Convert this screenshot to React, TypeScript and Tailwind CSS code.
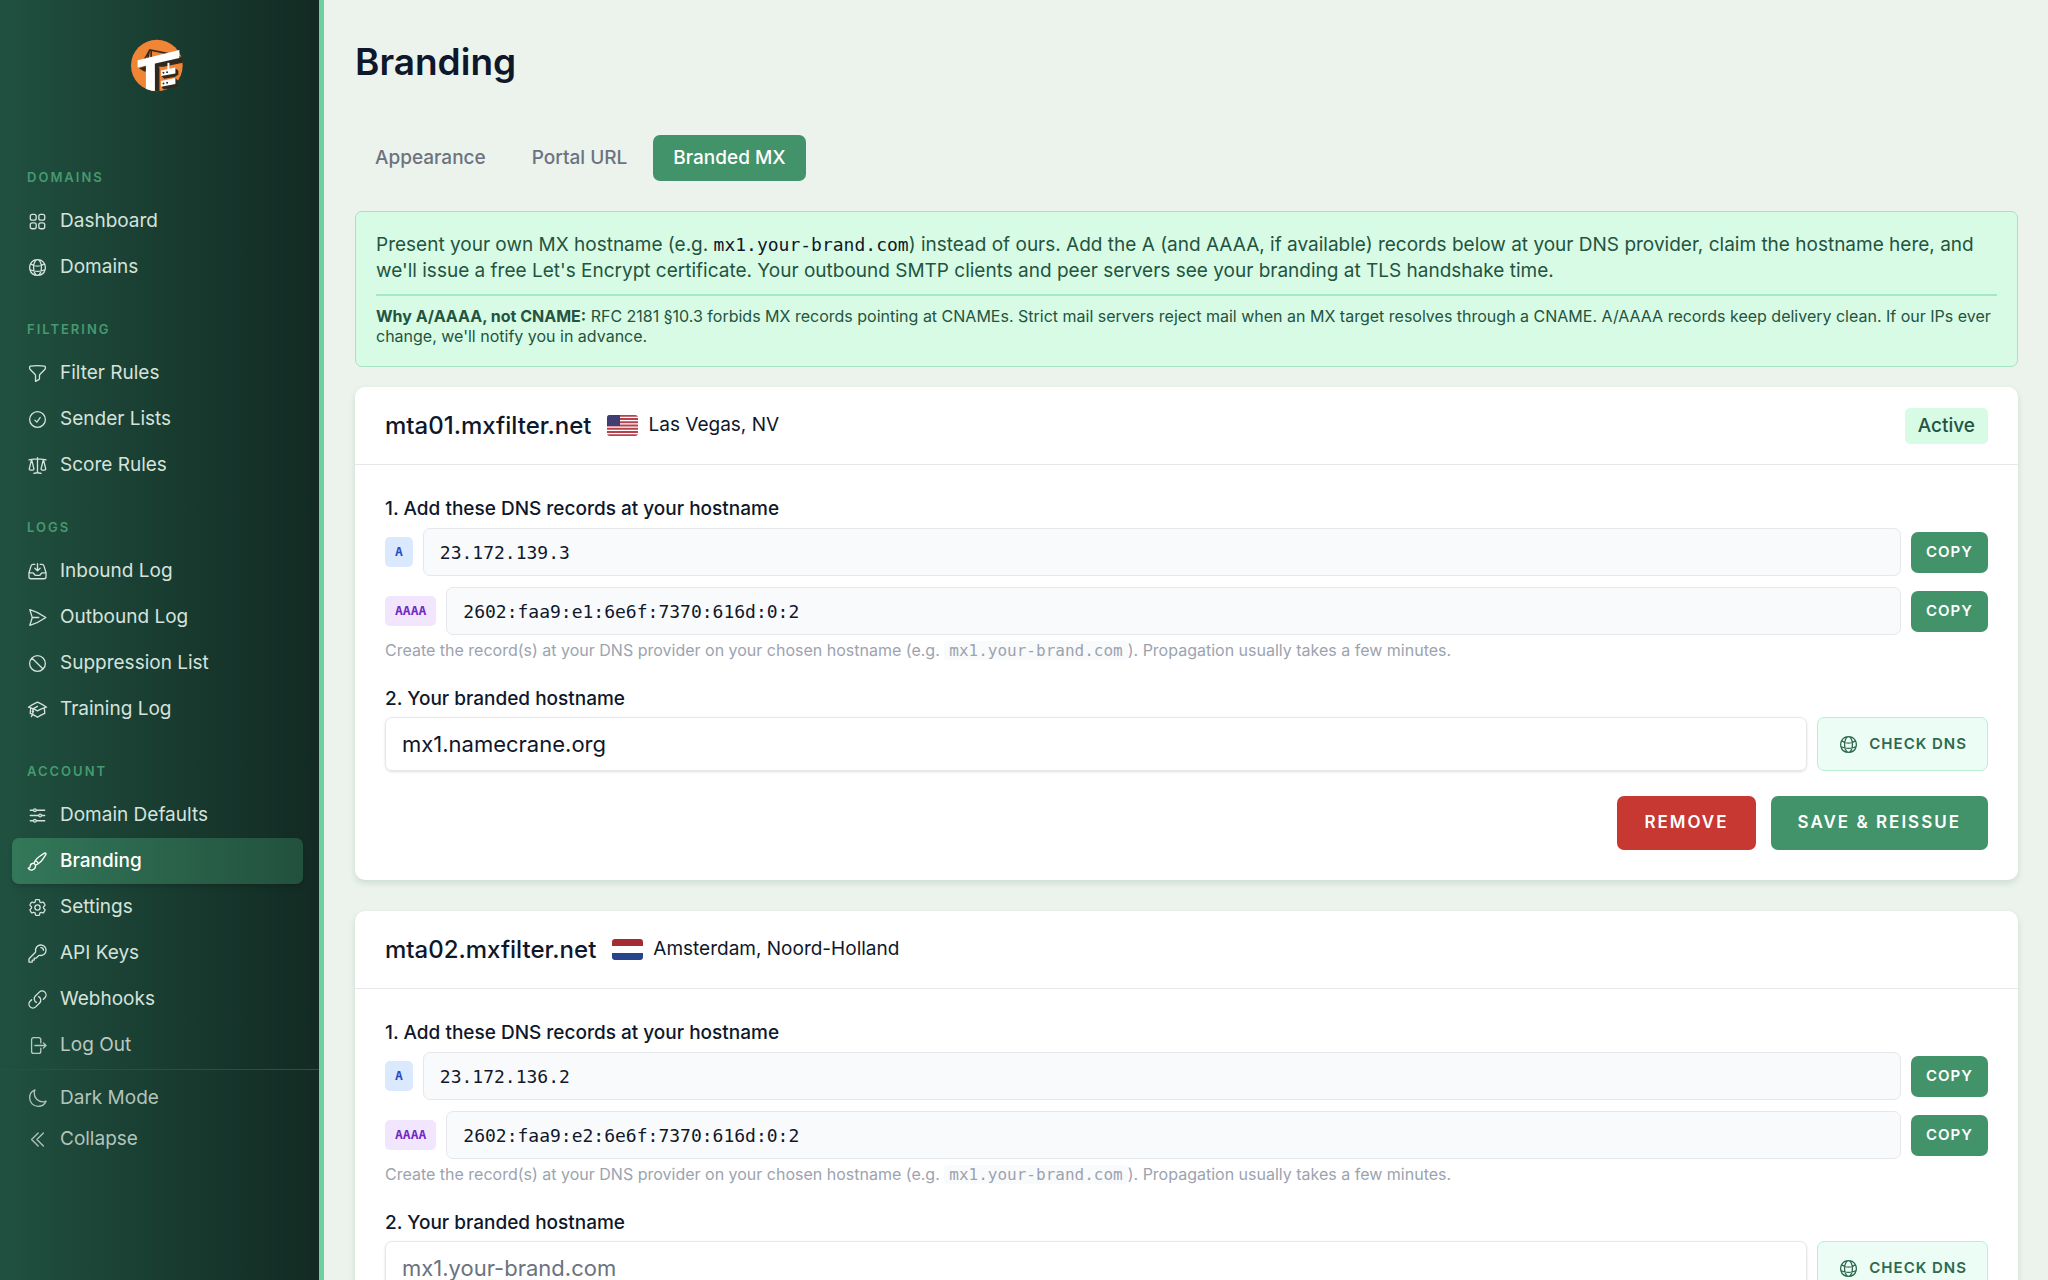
import React from "react";
import type { IconType } from "react-icons";
import {
  HiOutlineAcademicCap,
  HiOutlineAdjustmentsHorizontal,
  HiOutlineArrowRightOnRectangle,
  HiOutlineCheckCircle,
  HiOutlineChevronDoubleLeft,
  HiOutlineCog6Tooth,
  HiOutlineFunnel,
  HiOutlineGlobeAlt,
  HiOutlineInboxArrowDown,
  HiOutlineKey,
  HiOutlineLink,
  HiOutlineMoon,
  HiOutlineNoSymbol,
  HiOutlinePaintBrush,
  HiOutlinePaperAirplane,
  HiOutlineScale,
  HiOutlineSquares2X2,
} from "react-icons/hi2";

type NavItem = { label: string; icon: IconType; active?: boolean; dim?: boolean };
type NavGroup = { title: string; items: NavItem[] };

const NAV: NavGroup[] = [
  {
    title: "Domains",
    items: [
      { label: "Dashboard", icon: HiOutlineSquares2X2 },
      { label: "Domains", icon: HiOutlineGlobeAlt },
    ],
  },
  {
    title: "Filtering",
    items: [
      { label: "Filter Rules", icon: HiOutlineFunnel },
      { label: "Sender Lists", icon: HiOutlineCheckCircle },
      { label: "Score Rules", icon: HiOutlineScale },
    ],
  },
  {
    title: "Logs",
    items: [
      { label: "Inbound Log", icon: HiOutlineInboxArrowDown },
      { label: "Outbound Log", icon: HiOutlinePaperAirplane },
      { label: "Suppression List", icon: HiOutlineNoSymbol },
      { label: "Training Log", icon: HiOutlineAcademicCap },
    ],
  },
  {
    title: "Account",
    items: [
      { label: "Domain Defaults", icon: HiOutlineAdjustmentsHorizontal },
      { label: "Branding", icon: HiOutlinePaintBrush, active: true },
      { label: "Settings", icon: HiOutlineCog6Tooth },
      { label: "API Keys", icon: HiOutlineKey },
      { label: "Webhooks", icon: HiOutlineLink },
      { label: "Log Out", icon: HiOutlineArrowRightOnRectangle, dim: true },
    ],
  },
];

function Logo() {
  return (
    <svg viewBox="0 0 160 160" className="size-[53px]" role="img" aria-label="Company logo">
      <defs>
        <clipPath id="logo-round">
          <circle cx="78" cy="80" r="78" />
        </clipPath>
      </defs>
      <circle cx="78" cy="80" r="78" fill="#f08536" />
      <path d="M38 66 57 33 112 44M61 35V62M55 36 50 64" fill="none" stroke="#3a2a1c" strokeWidth="5" />
      <path d="M144 50 156 58V72L98 84H84V92L72 98 40 98 24 88Z" fill="#2f2a1f" />
      <path d="M72 86H86V158H72Z" fill="#2f2a1f" clipPath="url(#logo-round)" />
      <path d="M134 88 143 96V108L132 115 100 120 92 112ZM134 118 142 126V142L128 149 98 152 92 144Z" fill="#2f2a1f" />
      <path d="M20 64 146 33V57L20 86Z" fill="#fff" />
      <path d="M91 95 134 86V104L91 112ZM91 127 134 118V136L91 144Z" fill="#fff" />
      <path d="M113 72V94" stroke="#fff" strokeWidth="6" />
      <g fill="#2f2a1f">
        <circle cx="98" cy="102" r="3" />
        <circle cx="109" cy="100" r="3" />
        <circle cx="98" cy="134" r="3" />
        <circle cx="109" cy="132" r="3" />
      </g>
      <path d="M45 74 72 70V160H45Z" fill="#fff" clipPath="url(#logo-round)" />
    </svg>
  );
}

function NavLink({ label, icon: Icon, active, dim }: NavItem) {
  const base = "flex h-[46px] items-center gap-3 rounded-[7px] px-[15px] text-[19px]";
  const look = active
    ? "bg-linear-to-r from-[#337859] to-[#22513e] font-medium text-white shadow-md"
    : dim
      ? "text-[#b9c9c1]"
      : "text-[#d6e2dc]";
  return (
    <a href="#" aria-current={active ? "page" : undefined} className={base + " " + look}>
      <Icon className="size-[21px] shrink-0" />
      {label}
    </a>
  );
}

function Sidebar() {
  return (
    <aside className="flex w-[324px] shrink-0 flex-col border-r-[5px] border-[#6fd09f] bg-linear-to-r from-[#205140] to-[#122a23]">
      <div className="flex justify-center pt-[39px] pr-[5px] pb-[54px]">
        <Logo />
      </div>
      <nav className="flex flex-col">
        {NAV.map((group) => (
          <div key={group.title} className="pt-[21px] pr-4 pb-2 pl-3">
            <h2 className="mb-[11px] px-[15px] text-[13px] leading-5 font-semibold tracking-[2px] text-[#459a70] uppercase">
              {group.title}
            </h2>
            {group.items.map((item) => (
              <NavLink key={item.label} {...item} />
            ))}
          </div>
        ))}
      </nav>
      <div className="-mt-[7px] border-t border-[#24543f] px-3 pt-2">
        {[
          { label: "Dark Mode", icon: HiOutlineMoon },
          { label: "Collapse", icon: HiOutlineChevronDoubleLeft },
        ].map(({ label, icon: Icon }) => (
          <button
            key={label}
            type="button"
            className="flex h-[41px] w-full items-center gap-3 px-[15px] text-[19px] text-[#b3c4bb]"
          >
            <Icon className="size-[21px] shrink-0" />
            {label}
          </button>
        ))}
      </div>
    </aside>
  );
}

function Tabs() {
  const tabs = ["Appearance", "Portal URL", "Branded MX"];
  return (
    <div role="tablist" className="mt-[51px] flex gap-[6px]">
      {tabs.map((tab, i) => (
        <button
          key={tab}
          type="button"
          role="tab"
          aria-selected={i === 2}
          className={
            "h-[46px] rounded-[7px] px-5 text-[19px] font-medium " +
            (i === 2 ? "bg-[#43936a] text-white" : "text-[#6b7280]")
          }
        >
          {tab}
        </button>
      ))}
    </div>
  );
}

const MONO = "font-['DejaVu_Sans_Mono',monospace]";

function Notice() {
  return (
    <section className="mt-[30px] rounded-[7px] border border-[#a5e2c6] bg-[#d8fbe5] p-5 text-[#235440]">
      <p className="text-[19px] leading-[26px]">
        Present your own MX hostname (e.g.{" "}
        <code className="font-['DejaVu_Sans_Mono',monospace] text-[18px] text-[#0f172a]">mx1.your-brand.com</code>) instead of
        ours. Add the A (and AAAA, if available) records below at your DNS provider, claim the hostname here, and
        we'll issue a free Let's Encrypt certificate. Your outbound SMTP clients and peer servers see your branding at TLS
        handshake time.
      </p>
      <p className="mt-[10px] border-t-2 border-[#a3e9c9] pt-[10px] text-[16px] leading-5">
        <strong className="font-bold">Why A/AAAA, not CNAME:</strong> RFC 2181 §10.3 forbids MX records pointing at CNAMEs.
        Strict mail servers reject mail when an MX target resolves through a CNAME. A/AAAA records keep delivery clean. If
        our IPs ever change, we'll notify you in advance.
      </p>
    </section>
  );
}

function UsFlag() {
  return (
    <svg viewBox="0 0 62 42" className="h-[21px] w-[31px] rounded-[3px]" role="img" aria-label="United States">
      <path d="M0 0H62V42H0Z" fill="#fff" />
      <path
        d="M0 1.6H62M0 8.1H62M0 14.5H62M0 21H62M0 27.5H62M0 33.9H62M0 40.4H62"
        stroke="#b5424c"
        strokeWidth="3.8"
      />
      <path d="M0 0H26V22H0Z" fill="#3c3b6e" />
      <g stroke="#6f6f9a" strokeWidth="1.2" strokeDasharray="1.2 3">
        <path d="M2 4H25M4 8H25M2 12H25M4 16H25M2 20H25" />
      </g>
    </svg>
  );
}

function NlFlag() {
  return (
    <svg viewBox="0 0 62 42" className="h-[21px] w-[31px] rounded-[3px]" role="img" aria-label="Netherlands">
      <path d="M0 0H62V14H0Z" fill="#a32d32" />
      <path d="M0 14H62V28H0Z" fill="#fff" />
      <path d="M0 28H62V42H0Z" fill="#27458c" />
    </svg>
  );
}

type Mta = {
  id: string;
  host: string;
  flag: React.ReactNode;
  location: string;
  a: string;
  aaaa: string;
  hostname: string;
  active: boolean;
};

const MTAS: Mta[] = [
  {
    id: "mta01",
    host: "mta01.mxfilter.net",
    flag: <UsFlag />,
    location: "Las Vegas, NV",
    a: "23.172.139.3",
    aaaa: "2602:faa9:e1:6e6f:7370:616d:0:2",
    hostname: "mx1.namecrane.org",
    active: true,
  },
  {
    id: "mta02",
    host: "mta02.mxfilter.net",
    flag: <NlFlag />,
    location: "Amsterdam, Noord-Holland",
    a: "23.172.136.2",
    aaaa: "2602:faa9:e2:6e6f:7370:616d:0:2",
    hostname: "",
    active: false,
  },
];

function DnsRecord({ type, value }: { type: "A" | "AAAA"; value: string }) {
  return (
    <div className="flex items-center gap-[10px]">
      <span
        className={
          MONO +
          " rounded-[5px] px-[10px] text-[13px] leading-[30px] font-bold " +
          (type === "A" ? "bg-[#dbe9fe] text-[#2a4bc4]" : "bg-[#f1e6fe] text-[#7426c4]")
        }
      >
        {type}
      </span>
      <input
        readOnly
        aria-label={type + " record"}
        value={value}
        className={MONO + " h-12 min-w-0 flex-1 rounded-[7px] border border-[#e5e7eb] bg-[#f9fafc] px-4 text-[18px] text-[#0f172a]"}
      />
      <button
        type="button"
        className="h-[41px] rounded-[7px] bg-[#43936a] px-[15px] text-[15px] font-semibold tracking-[1px] text-white uppercase"
      >
        Copy
      </button>
    </div>
  );
}

function MtaCard({ mta }: { mta: Mta }) {
  return (
    <section className="rounded-[10px] bg-white text-[#0f172a] shadow-[0_3px_6px_rgba(45,106,79,0.16)]">
      <header className="flex h-[78px] items-center border-b border-[#e5e7eb] px-[30px]">
        <h2 className="mr-4 text-[24px] font-medium">{mta.host}</h2>
        {mta.flag}
        <span className="ml-[10px] text-[19px]">{mta.location}</span>
        {mta.active && (
          <span className="ml-auto rounded-[5px] bg-[#d8fbe5] px-[13px] text-[19px] leading-9 font-medium text-[#235440]">
            Active
          </span>
        )}
      </header>
      <div className="px-[30px] pt-[31px] pb-[30px]">
        <h3 className="mb-[6px] text-[19px] leading-[26px] font-medium">1. Add these DNS records at your hostname</h3>
        <div className="flex flex-col gap-[11px]">
          <DnsRecord type="A" value={mta.a} />
          <DnsRecord type="AAAA" value={mta.aaaa} />
        </div>
        <p className="mt-[5px] text-[16px] leading-5 text-[#9ca3af]">
          Create the record(s) at your DNS provider on your chosen hostname (e.g.{" "}
          <code className="rounded-[4px] bg-[#f9fafc] px-[5px] font-['DejaVu_Sans_Mono',monospace] text-[16px]">
            mx1.your-brand.com
          </code>
          ). Propagation usually takes a few minutes.
        </p>
        <label htmlFor={mta.id + "-hostname"} className="mt-[25px] mb-[5px] block text-[19px] leading-[26px] font-medium">
          2. Your branded hostname
        </label>
        <div className="flex gap-[10px]">
          <input
            id={mta.id + "-hostname"}
            defaultValue={mta.hostname}
            placeholder="mx1.your-brand.com"
            className="h-[54px] min-w-0 flex-1 rounded-[7px] border border-[#e5e7eb] px-4 text-[22px] shadow-sm placeholder:text-[#6b7280]"
          />
          <button
            type="button"
            className="flex items-center gap-[10px] rounded-[7px] border border-[#b7f0d2] bg-[#ecfdf5] px-5 text-[15px] font-semibold tracking-[1px] text-[#2d6a4f] uppercase"
          >
            <HiOutlineGlobeAlt className="size-[21px]" />
            Check DNS
          </button>
        </div>
        <div className="mt-[25px] flex justify-end gap-[15px] text-[17px] font-semibold tracking-[2px] text-white uppercase">
          {mta.active && (
            <button type="button" className="h-[54px] rounded-[7px] bg-[#c73832] px-[27px] uppercase">
              Remove
            </button>
          )}
          <button type="button" className="h-[54px] rounded-[7px] bg-[#43936a] px-[27px] uppercase">
            {mta.active ? "Save & Reissue" : "Save"}
          </button>
        </div>
      </div>
    </section>
  );
}

export default function App() {
  return (
    <div className="flex h-screen overflow-hidden bg-[#ebf3ec] font-['Inter',sans-serif]">
      <Sidebar />
      <main className="min-w-0 flex-1 overflow-y-auto pt-10 pr-[30px] pb-8 pl-[31px] [scrollbar-width:none]">
        <h1 className="text-[37px] leading-[44px] font-semibold text-[#0f172a]">Branding</h1>
        <Tabs />
        <Notice />
        <div className="mt-5 flex flex-col gap-[31px]">
          {MTAS.map((mta) => (
            <MtaCard key={mta.id} mta={mta} />
          ))}
        </div>
      </main>
    </div>
  );
}
